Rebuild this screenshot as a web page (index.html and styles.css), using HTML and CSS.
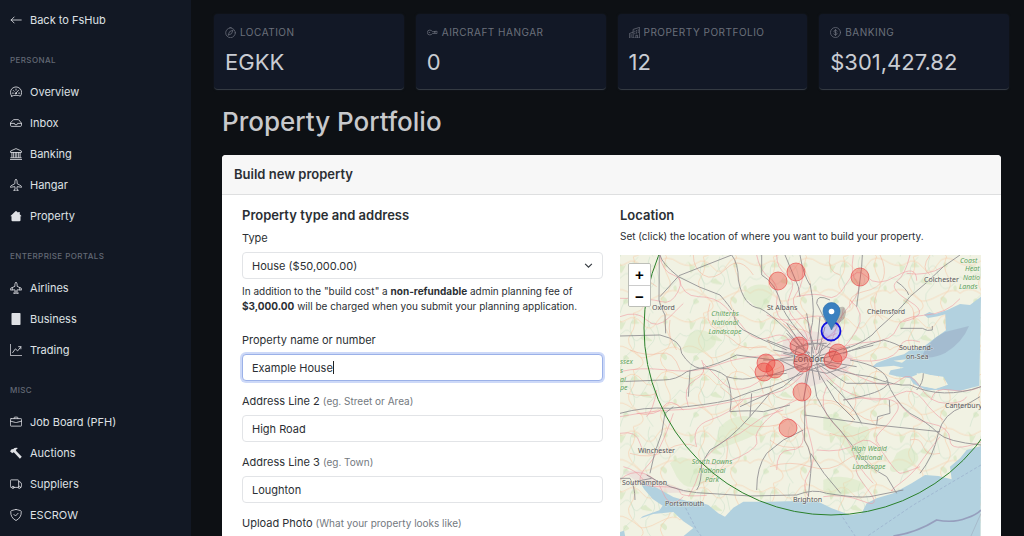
FILE: index.html
```html
<!DOCTYPE html>
<html lang="en">
<head>
<meta charset="utf-8">
<meta name="viewport" content="width=device-width, initial-scale=1">
<title>Property Portfolio</title>
<link rel="stylesheet" href="styles.css">
</head>
<body>
<div class="app">
  <nav class="sidebar" aria-label="Main">
    <a class="nav-link" href="#"><svg class="icon" viewBox="0 0 16 16"><path d="M15 8H1.500M5.500 4l-4 4 4 4"/></svg>Back to FsHub</a>
    <h2 class="nav-title">Personal</h2>
    <ul class="nav-list">
      <li><a class="nav-link" href="#"><svg class="icon" viewBox="0 0 16 16"><path d="M2.200 13.500a7.500 7.500 0 1 1 11.600 0c-3-1.500-8.600-1.500-11.600 0zM8 4v1.500M3 9.500h1.500M11.500 9.500H13M4.500 6l1 1M7.500 10l4-4.500"/><circle cx="7.700" cy="9.800" r=".8"/></svg>Overview</a></li>
      <li><a class="nav-link" href="#"><svg class="icon" viewBox="0 0 16 16"><path d="M4.200 3.900Q4.500 3.500 5 3.500h6q.5 0 .8.400l3.700 4.600-.4 3.200q-.1.800-1 .8H1.900q-.9 0-1-.8L.5 8.500zM.5 8.500H6a2 2 0 0 0 4 0h5.500"/></svg>Inbox</a></li>
      <li><a class="nav-link" href="#"><svg class="icon" viewBox="0 0 16 16"><path d="M.8 5.500V4L8 .8 15.200 4v1.500zM2.500 6v6.500M4.500 6v6.500M7 6v6.500M9 6v6.500M11.500 6v6.500M13.500 6v6.500M1 13h14M.3 15.300h15.400"/></svg>Banking</a></li>
      <li><a class="nav-link" href="#"><svg class="icon" viewBox="0 0 16 16"><path d="M8 .6C6.900.6 6.500 2.500 6.500 4v2.200L1 9.300Q.5 9.700.5 10.500V11l6-.8.3 2.900-1.700 1.400v.9l2.400-.5h1l2.400.5v-.9l-1.700-1.400.3-2.900 6 .8v-.5q0-.8-.5-1.200L9.500 6.200V4C9.500 2.500 9.100.6 8 .6z"/></svg>Hangar</a></li>
      <li><a class="nav-link" href="#"><svg class="icon solid" viewBox="0 0 16 16"><path d="M7.300 1.500q.7-.6 1.400 0L11 3.800V2.500h2v3.300L15.300 8l-.7.700-.6-.6V13.500q0 1.500-1.500 1.500h-9Q2 15 2 13.500V8.100l-.6.600L.7 8z"/></svg>Property</a></li>
    </ul>
    <h2 class="nav-title">Enterprise Portals</h2>
    <ul class="nav-list">
      <li><a class="nav-link" href="#"><svg class="icon" viewBox="0 0 16 16"><path d="M8 .6C6.900.6 6.500 2.500 6.500 4v1.800L1 8.300Q.5 8.700.5 9.500v1.200l6-.3.3 2.300-1.700 1.400v1.300l2.400-.6h1l2.400.6v-1.300l-1.700-1.400.3-2.300 6 .3V9.500q0-.8-.5-1.200L9.500 5.800V4C9.500 2.500 9.100.6 8 .6zM3 7.500v3M13 7.500v3M8 12v3"/></svg>Airlines</a></li>
      <li><a class="nav-link" href="#"><svg class="icon solid" viewBox="0 0 16 16"><rect x="2" y="0" width="12" height="16" rx="1"/></svg>Business</a></li>
      <li><a class="nav-link" href="#"><svg class="icon" viewBox="0 0 16 16"><path d="M.5 0v15.500H16M3.500 11.500l3.700-5 3 2.700 4.300-5.500M11.500 3.500h3v3"/></svg>Trading</a></li>
    </ul>
    <h2 class="nav-title">Misc</h2>
    <ul class="nav-list">
      <li><a class="nav-link" href="#"><svg class="icon" viewBox="0 0 16 16"><path d="M1.500 3.500h13q1 0 1 1v8q0 1-1 1h-13q-1 0-1-1v-8q0-1 1-1zM5.500 3.500V2.500q0-1 1-1h3q1 0 1 1v1M.5 6.800 7.500 8.700h1l7-1.900"/></svg>Job Board (PFH)</a></li>
      <li><a class="nav-link" href="#"><svg class="icon solid" viewBox="0 0 16 16"><path d="M0 5.500 2.500 2.800 4 3Q6.500.3 10.500 1.300L7.800 4l.5 1.200L15.700 13l-2.500 2.500-7.500-8L4.500 7 3 8.300z"/></svg>Auctions</a></li>
      <li><a class="nav-link" href="#"><svg class="icon" viewBox="0 0 16 16"><path d="M2.500 12.500h-1q-1 0-1-1v-8q0-1 1-1h9q1 0 1 1v9h-6M11.500 5h2l2 3v3.500q0 1-1 1"/><circle cx="4" cy="12.500" r="1.500"/><circle cx="12.500" cy="12.500" r="1.500"/></svg>Suppliers</a></li>
      <li><a class="nav-link" href="#"><svg class="icon" viewBox="0 0 16 16"><path d="M8 .6Q6 1 1.800 2.200 1 2.500 1 3.300.5 11.500 8 15.400 15.500 11.500 15 3.300q0-.8-.8-1.100Q10 1 8 .6zM5.300 7.300l2 2 3.500-3.600"/></svg>ESCROW</a></li>
    </ul>
  </nav>

  <main class="main">
    <section class="stats" aria-label="Summary">
      <div class="stat">
        <div class="stat-label"><svg class="icon small" viewBox="0 0 16 16"><circle cx="8" cy="8.500" r="7"/><path d="M7 .6h2M11.500 5 9.500 9.700 4.500 12l2-4.700z"/></svg>Location</div>
        <div class="stat-value">EGKK</div>
      </div>
      <div class="stat">
        <div class="stat-label"><svg class="icon small" viewBox="0 0 16 16"><path d="M8 6.500Q6.500 4.500 4 4.500a3.500 3.500 0 0 0 0 7q2.500 0 4-2h6.500L16 8l-1.500-1.500zM3 8h1M11 6.500v1.500M13 6.500v1.500"/></svg>Aircraft Hangar</div>
        <div class="stat-value">0</div>
      </div>
      <div class="stat">
        <div class="stat-label"><svg class="icon small" viewBox="0 0 16 16"><path d="M.5 15.500V9.500L6 7.500v-4l9.500-3v15zM6 7.500v8M10 15.500V12h2.500v3.500M3 11v1M3 13v1M8.500 6v1M8.500 9v1M11 5v1M11 8v1M13.500 4v1M13.500 7v1"/></svg>Property Portfolio</div>
        <div class="stat-value">12</div>
      </div>
      <div class="stat">
        <div class="stat-label"><svg class="icon small" viewBox="0 0 16 16"><circle cx="8" cy="8" r="7.300"/><path d="M8 3.500v9M10.300 6Q10 4.800 8 4.800 5.800 4.800 5.800 6.300 5.800 7.600 8 8t2.300 1.700Q10.300 11.300 8 11.300 5.800 11.300 5.500 10"/></svg>Banking</div>
        <div class="stat-value">$301,427.82</div>
      </div>
    </section>

    <div class="content">
      <h1 class="page-title">Property Portfolio</h1>
      <section class="panel">
        <h2 class="panel-title">Build new property</h2>
        <form class="panel-body">
          <div class="column">
            <h3 class="column-title">Property type and address</h3>
            <div class="field">
              <label for="type">Type</label>
              <div class="select-wrap">
                <select class="control" id="type"><option>House ($50,000.00)</option></select>
                <svg class="chevron" viewBox="0 0 16 16"><path d="m2 5 6 6 6-6"/></svg>
              </div>
              <p class="help">In addition to the "build cost" a <strong>non-refundable</strong> admin planning fee of <strong>$3,000.00</strong> will be charged when you submit your planning application.</p>
            </div>
            <div class="field">
              <label for="name">Property name or number</label>
              <div class="edit-wrap"><input class="control active" id="name" type="text" value="Example House"><span class="caret"></span></div>
            </div>
            <div class="field">
              <label for="line2">Address Line 2 <small>(eg. Street or Area)</small></label>
              <input class="control" id="line2" type="text" value="High Road">
            </div>
            <div class="field">
              <label for="line3">Address Line 3 <small>(eg. Town)</small></label>
              <input class="control" id="line3" type="text" value="Loughton">
            </div>
            <div class="field">
              <label for="photo">Upload Photo <small>(What your property looks like)</small></label>
              <input class="control" id="photo" type="file">
            </div>
          </div>

          <div class="column">
            <h3 class="column-title">Location</h3>
            <p class="help">Set (click) the location of where you want to build your property.</p>
            <div class="map">
              <svg class="map-art" viewBox="0 0 361 300" role="img" aria-label="Map of south east England">
                <defs>
                  <pattern id="lanes" width="210" height="170" patternUnits="userSpaceOnUse">
                    <g fill="#cbe2b4" opacity=".5"><path d="M15 25q9-16 16-4t14 4-4 14-12-4-14-10zM95 70q12-8 14-4t14 12-14 4-14-12zM150 125q8-10 16-2t4 14-8 2-12-14zM40 130q6-8 12-2t6 8-10 6-8-12zM160 20q8-6 12 2t-6 10-6-12zM70 20q8-6 10 0t8 8-14 4-4-12zM190 90q8-8 10 2t-4 10-6-12z"/></g>
                    <g fill="none" stroke="#bcdac0" stroke-width="2" opacity=".6"><path d="M0 60q20 18 38-2t30 12 40-20 38 14 64-4M30 170q10-40 32-54t4-50 20-66M120 0q-14 30 6 52t-8 46 12 72"/></g>
                    <g fill="none" stroke="#f8c7a2" stroke-width="2" opacity=".8"><path d="M0 20q30 14 52-2t46 14 44-8 68-4M0 110q24-20 50-6t38 26 60-14 62-6M70 0q12 36-8 62t20 60-12 48M170 0q-14 30 4 60t-10 54 6 56"/></g>
                  </pattern>
                </defs>
                <g transform="scale(.333333) translate(-30 -165)">
                  <rect x="30" y="165" width="1083" height="900" fill="#f1f2e3"/>
                  <rect x="30" y="165" width="1083" height="900" fill="url(#lanes)"/>
                  <g fill="#cfe5b8" opacity=".4">
                    <path d="M400 280q20-30 60-26t20 50-50 10-30 10zM240 400q30-20 60 0t10 40-60 20-30-20zM330 680q40-40 90-30t40 30-60 40-90 30zM640 650q30-20 60 10t60 20 10 60-60 10-70-60zM180 790q30-30 60-10t60 30-20 40-80-20zM640 840q40-20 100 0t-20 40-80-10zM860 760q40-30 60 0t-40 50-30-30z"/>
                  </g>
                  <g fill="#eadcd8" opacity=".7"><path d="M520 420l60-30 70 10 40 40 40 30-20 50-50 20-60 20-60-20-30-60z"/><path d="M40 815l50-4 50 30 60 20 40 16-60 2-80-20z"/></g>

                  <path fill="#b2d1df" d="M1113 290l-33 25-30-3-38 18-36 12-18-6-16 8 12 10 30-5 22-6 2 48-34 24-34 26-38 8-20 14-40 10-42 16-14 12 22 0 44-4 30 6-40 8-6 12 24 6 40 6 10 16 40 20 48-2 50 4 60-16zM920 520l80 10 14 24-36 12-50-10z" fill-rule="evenodd"/>
                  <path d="M905 530l30-12 60 16 14 20-34 12-42-8zM850 482l40-4-14 10z" fill="#f0f1df"/>
                  <path fill="#b2d1df" d="M1113 738l-43 12-20 25-30 25 5 38-40-10-40-3-40 25-55 30-50 15-30 15-15 30-35 5-55-20-40-20-65-2-80 2-80 0-30 18-25 27-20-10-30-25-30-10-35-2-40-12-50-28-34-14-18-6 14 24 26 30 30 20-10 14-50 18-40 38-30 10v75h1083z"/>
                  <path id="wight" d="M42 990l28-28 60-20 60-6 30 28 30 20-34 28-50 26-70-6-50-20z" fill="#f1f2e3"/>
                  <path d="M42 990l28-28 60-20 60-6 30 28 30 20-34 28-50 26-70-6-50-20z" fill="url(#lanes)"/>
                  <path d="M935 470q20-50 70-74l72-18q-20 50-70 80-40 20-72 12z" fill="#8f9bb8" opacity=".38"/>

                  <g fill="none" stroke="#ef96a0" stroke-width="2" opacity=".85" stroke-linejoin="round">
                    <path d="M150 165q6 50 40 60t14 50-50 30-124-10M206 230q10 60 60 60t80 30 60 70 80 20 60 40M30 350q50-20 80 10t70-10 40-40M30 515q60-14 130-6t110 0 70-20 100-20 100 0M440 165q10 50 40 70t20 70 40 70 40 70M500 165q0 40 30 60t10 60 20 80 30 60M575 190q10 60-16 90t20 70 10 80M730 165q-10 60 10 80t-20 70-40 60-20 60M560 290q60-14 90 0t60-40 60-20 90-2 60 14M700 325q-6 60-50 90t-30 50M720 300q50 40 20 90t-50 60M470 345q40 20 80 14t60-10 70 10M520 370q40 40 80 90M650 460q60-30 130-34t80-40 80-40 110-50M700 470q60 20 110 10t60-40 60-14M640 480q60 30 130 60t100 0 60 20 80 50 60-20M620 490q50 70 100 90t80 20 70-20 70 20 60 60M600 500q-20 60-16 120t20 110-8 90 0 70M580 520q-40 50-90 60t-100 20-100 20-100 10-160 20M190 640q-20 60-40 100t-40 60-20 40 60 20 60 16 80 10M236 890l20-40 24-70 50-50 60-30 70-50 60-20M400 600q-40 40-100 60t-40 80M235 620q-20-60 20-80t20-60M560 600q-50 20-90 60t-30 60-50 50-100 20M520 650q60 20 60 60t-40 40-40 60M650 560q-30 60 20 110t60 90 60 90M700 600q60-10 120-4t40 40-50 60 20 60M860 600q40 60 100 70t60 50 93 6M990 710q-40 50-60 80t-60 60-20 20M640 890q60-10 120 14t10-40-20-60M620 750q80 10 120-20t80 30 50 60 60-20M30 840q30-30 70-20t60 60 60 10M40 800q40 10 60 40M80 640q60 10 80-20t60 10M480 480q-10 60-60 80t-80-10-60-60M500 430q40-20 80-10t100-20M1113 560q-40 20-90 10t-60 30M900 165q-14 60-40 80t40 60-20 60M1000 200q-50 30-110 20M30 700q50-10 60 30t40 30M140 570q-10 60-30 80"/>
                  </g>
                  <g fill="none" stroke="#f5a890" stroke-width="2" opacity=".7">
                    <path d="M60 240q40-14 80 20M250 165q0 40 30 60t70-20 80 20M300 310q-20 60 20 80t60 40 90 10M60 450q50 20 90 10t60 50M180 360q-10 50 20 90M330 560q60 40 60 80t60 40 80-20M660 165q-10 50 30 60M810 165q20 40 10 70t-60 40-40 50M960 165q-30 40 0 60M800 280q-20 50 20 80M880 300q40 20 30 60M480 560q10 40 60 40t100 0 100 40 80 10M660 700q50 20 90 0t80-20M350 720q10 60-20 90t-60 40M480 720q30 30 100 20M480 800q60-20 120 0t110-20 90 40M900 720q30-10 40 20t50 20M50 580q60 14 90 0M60 760q60 20 110-10t90-10M730 560q20 60-10 80M420 500q30 30 40 80M540 390q30-10 60 10"/>
                  </g>
                  <g fill="none" stroke="#827f86" stroke-width="3" stroke-linejoin="round" opacity=".75">
                    <path d="M148 165l-1 135q3 20 18 45l2 55M150 165q5 25 55 65 65 35 125 55 30 35 35 45M207 227l158-62M207 227l-57 63M365 165q20 25 20 75 15 80 65 85 30 15 80 65l40 50M455 165v60q45 25 60 95 25 50 75 100M525 165l40 95 5 30M600 250q20 90 0 150l15 50M570 165q10 60 30 90M757 165l-2 35-15 120"/>
                    <path d="M30 408l120-3q65 15 65 55 25 40 55 45 50-10 110-40l110 15 60-10M30 545l130-5q40 0 70-25l40-10q50 0 80 25 50 15 90 0l90-10M240 510l-5 80M350 530q20 50 10 105M30 640q70-20 150-15 110-10 180-25 70-30 120-40l100-40M120 820q10-60 35-120l10-60 25-20M30 835h30q15 25 15 65M75 845l50-10"/>
                    <path d="M260 870q15-20 15-80l25-40q60-30 120-100l5-70M440 870q0-70 30-110l50-40 60-30M585 600l-2 120q27 40 19 100l-7 70M583 645l217 30 190 20M800 675l3-25 37-10-2-40M620 590q30 60 70 100l40 50q40 60 100 90l30 50M650 540q70 60 105 130M830 540q20 60 70 100 50 25 85 60 25 25 128 35M985 700q15-60 75-80l50-30M985 700q-15 70-55 120M360 635q60-5 100 0l80-20M420 650l60-70M602 760l40 60 50 60"/>
                    <path d="M700 450q80-30 100-60 80-70 100-100 50-40 100-90l50-35M860 245q30 20 36 40M700 460q80-30 120-40 40 10 60 25M872 385h65q15 10 30 5v-12M720 480q110 20 115 70-15 30-135 50M110 825q70 45 150 53l160 10 140-3q50-20 90-5 90 15 130 10l100-20M630 490q60 30 150 40 80 30 120 25 100 45 213 5M940 520q0 30-20 50M660 300q-40-20-40 10l30 60M370 330q0 40 30 60l60 30 70 30"/>
                    <path d="M600 470l-70-100M600 470l-130-50M610 460l-20-120M620 450l10-100M625 460l20-80M620 470l100-30M620 480l110-30 60-14M620 480l120 20M620 490l90 60 120 0M615 500l60 100 60 60M605 500l15 90M600 500l-20 100M590 500l-70 60-130 60M590 490l-120 40M590 480l-130 0M560 440l60-10 60 20-20 40-60 20-50-20zM540 460l50-30 60 0M550 500l100 20 60-20M520 460l80 20 60-50M575 430l20 60-10 60M640 430l-20 60 10 50M540 430l60 30M510 480l60 30 60-20 50 10M605 440v60M530 400l60 60M490 450l100 20"/>
                  </g>
                  <g fill="none" stroke="#93a7c8" stroke-width="3" stroke-dasharray="9 6" opacity=".6"><path d="M1113 795L910 915 770 1010M220 910l40 80 30 40M690 940l60 90"/></g>
                  <path d="M850 1008q70-10 130-48 50 10 90-6 30-10 43-24" fill="none" stroke="#8f91b4" stroke-width="5" opacity=".8"/>
                  <path d="M1113 940l-30 68" fill="none" stroke="#8f91a4" stroke-width="2" opacity=".5"/>
                </g>

                <g class="place">
                  <text x="32" y="55">Oxford</text><text x="147" y="55">St Albans</text>
                  <text x="247" y="59">Chelmsford</text><text x="304" y="27">Colchester</text>
                  <text x="279" y="95">Southend-</text><text x="286" y="104">on-Sea</text>
                  <text x="18" y="198">Winchester</text><text x="2" y="230">Southampton</text>
                  <text x="45" y="251">Portsmouth</text><text x="173" y="247">Brighton</text>
                  <text x="325" y="153">Canterbury</text>
                  <text class="city" x="173" y="107">London</text>
                </g>
                <g class="park">
                  <text x="105" y="61">Chilterns</text><text x="105" y="70">National</text><text x="105" y="79">Landscape</text>
                  <text x="92" y="209">South Downs</text><text x="92" y="218">National</text><text x="92" y="227">Park</text>
                  <text x="249" y="196">High Weald</text><text x="249" y="205">National</text><text x="249" y="214">Landscape</text>
                </g>
                <g class="park edge">
                  <text x="340" y="8">Coast</text><text x="345" y="16">Heat</text><text x="343" y="25">Natio</text><text x="339" y="34">Lands</text>
                  <text x="0" y="109">ssex</text><text x="0" y="118">s</text><text x="0" y="127">al</text><text x="0" y="135">pe</text>
                </g>

                <circle cx="211" cy="73" r="187" fill="none" stroke="#2a802a" stroke-width="1"/>
                <g class="owned">
                  <circle cx="158" cy="26" r="9"/><circle cx="176" cy="17" r="9"/><circle cx="240" cy="22" r="9"/>
                  <circle cx="179" cy="91" r="9"/><circle cx="146" cy="108" r="9"/><circle cx="144" cy="117" r="9"/>
                  <circle cx="155" cy="114" r="9"/><circle cx="183" cy="108" r="9"/><circle cx="218" cy="98" r="9"/>
                  <circle cx="213" cy="105" r="9"/><circle cx="182" cy="137" r="9"/><circle cx="168" cy="173" r="9"/>
                </g>
                <path d="M212 74l12-10q4-8 0-12-5-1-8 4z" fill="#444" opacity=".3"/>
                <circle cx="211" cy="76" r="9.500" fill="#6464ff" fill-opacity=".25" stroke="#1010e0" stroke-width="1.800"/>
                <path d="M211.500 75c-2-6-8.500-12-8.500-19a8.500 8.500 0 0 1 17 0c0 7-6.500 13-8.500 19z" fill="#3a80c0" stroke="#2d6ea8" stroke-width=".6"/>
                <circle cx="211.500" cy="56.500" r="2.800" fill="#fff"/>
              </svg>
              <div class="zoom"><button type="button" aria-label="Zoom in">+</button><button type="button" aria-label="Zoom out">−</button></div>
            </div>
          </div>
        </form>
      </section>
    </div>
  </main>
</div>
</body>
</html>
```
FILE: styles.css
```css
* { box-sizing: border-box; }

body {
  margin: 0;
  background: #0d1014;
  color: #2b2f34;
  font-family: Inter, "Liberation Sans", sans-serif;
  font-size: 11px;
}

h1, h2, h3, p, ul { margin: 0; padding: 0; }

.app {
  display: grid;
  grid-template-columns: 191px minmax(0, 1fr);
  height: 100vh;
}

.sidebar {
  padding: 4px 10px;
  overflow: hidden;
  background: #121824;
}

.nav-list { list-style: none; }

.nav-link {
  display: flex;
  align-items: center;
  gap: 8px;
  height: 31px;
  color: #dfe1e5;
  text-decoration: none;
}

.nav-title {
  margin-top: 10px;
  color: #636975;
  font-size: 8px;
  font-weight: 500;
  letter-spacing: .05em;
  line-height: 31px;
  text-transform: uppercase;
}

.icon {
  width: 12px;
  height: 12px;
  fill: none;
  stroke: currentColor;
  stroke-width: 1.1;
  stroke-linejoin: round;
  stroke-linecap: round;
  flex: none;
}

.icon.solid { fill: currentColor; stroke: none; }
.icon.small { width: 11px; height: 11px; }

.main { overflow: hidden; padding: 14px 15px 0 23px; }

.stats {
  display: grid;
  grid-template-columns: repeat(4, minmax(0, 1fr));
  gap: 12px;
}

.stat {
  padding: 9px 11px 11px;
  border-bottom: 1px solid #343a42;
  border-radius: 4px;
  background: #121826;
  box-shadow: 0 0 2px #181d28;
}

.stat-label {
  display: flex;
  align-items: center;
  gap: 4px;
  color: #6b707b;
  font-size: 10px;
  letter-spacing: .05em;
  line-height: 18px;
  text-transform: uppercase;
  white-space: nowrap;
}

.stat-value {
  margin-top: 5px;
  color: #c9ccd3;
  font-size: 22px;
  line-height: 32px;
}

.content { padding: 14px 8px 0; }

.page-title {
  color: #c8c9cc;
  font-size: 26px;
  font-weight: 500;
  line-height: 36px;
}

.panel {
  margin-top: 15px;
  overflow: hidden;
  border-radius: 4px;
  background: #fff;
}

.panel-title {
  padding: 0 12px;
  border-bottom: 1px solid #dedfe0;
  background: #f7f7f7;
  font-size: 13px;
  font-weight: 600;
  line-height: 39px;
}

.panel-body {
  display: grid;
  grid-template-columns: repeat(2, minmax(0, 1fr));
  gap: 17px;
  padding: 10px 20px 20px;
}

.column-title {
  margin-bottom: 4px;
  font-size: 13px;
  font-weight: 600;
  line-height: 20px;
}

.field { margin-bottom: 11px; }

.field label {
  display: block;
  margin-bottom: 5px;
  line-height: 18px;
}

.field small { color: #737980; font-size: 10px; }

.control {
  display: block;
  width: 100%;
  height: 27px;
  padding: 0 9px;
  border: 1px solid #e2e4e7;
  border-radius: 4px;
  background: #fff;
  color: inherit;
  font: inherit;
  appearance: none;
}

.control.active {
  border-color: #9bb1e8;
  box-shadow: 0 0 0 2px #cdd9f8;
  outline: none;
}

.select-wrap, .edit-wrap { position: relative; }

.chevron {
  position: absolute;
  top: 9px;
  right: 10px;
  width: 9px;
  height: 9px;
  fill: none;
  stroke: #343a40;
  stroke-width: 2;
  pointer-events: none;
}

.caret {
  position: absolute;
  top: 7px;
  left: 91px;
  width: 1px;
  height: 13px;
  background: #222;
}

.help { font-size: 10px; line-height: 15px; }
.field .help { margin: 5px 0 17px; }

.map {
  position: relative;
  margin-top: 11px;
  overflow: hidden;
}

.map-art { display: block; width: 100%; height: auto; }

.place, .park {
  font-family: "Noto Sans", sans-serif;
  font-size: 7px;
  paint-order: stroke;
  stroke: #f5f5e8;
  stroke-width: 1px;
  stroke-opacity: .6;
}

.place { fill: #56545a; }
.place .city { font-size: 9px; }
.park { fill: #5fa35f; font-style: italic; text-anchor: middle; }
.park.edge { text-anchor: start; }

.owned { fill: #f03c32; fill-opacity: .38; stroke: #e84848; stroke-opacity: .65; stroke-width: 1; }

.zoom {
  position: absolute;
  top: 8px;
  left: 8px;
  overflow: hidden;
  border: 1px solid #bdbfb9;
  border-radius: 2px;
}

.zoom button {
  display: block;
  width: 21px;
  height: 21px;
  padding: 0;
  border: 0;
  background: #fff;
  color: #000;
  font: bold 15px/21px "Liberation Sans", sans-serif;
}

.zoom button + button { border-top: 1px solid #ccc; }
```
